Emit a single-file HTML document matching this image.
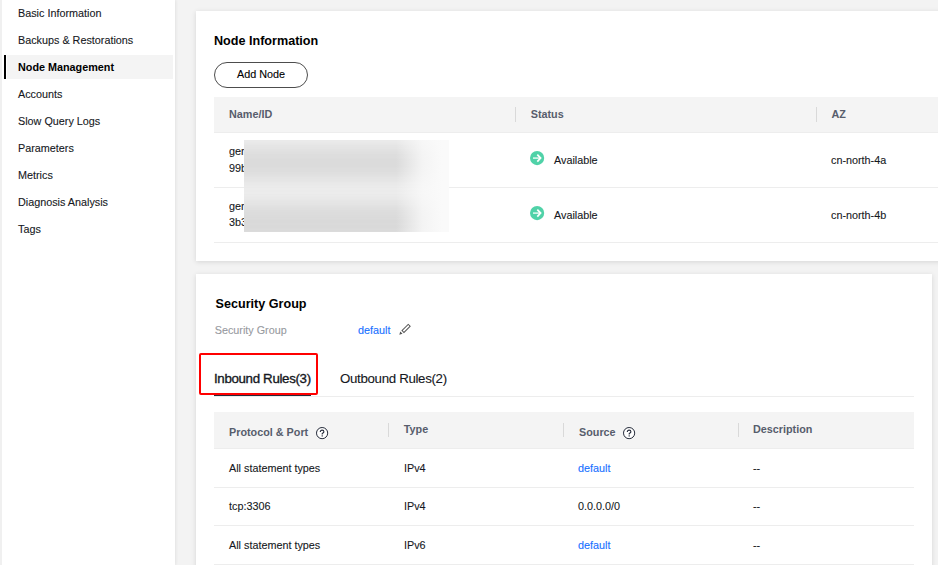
<!DOCTYPE html>
<html><head><meta charset="utf-8">
<style>
*{margin:0;padding:0;box-sizing:border-box}
html,body{width:938px;height:565px;overflow:hidden;background:#f3f3f3;font-family:"Liberation Sans",sans-serif;color:#151822}
.t{-webkit-text-stroke:0.1px currentColor}
.t.b,.t.hc{-webkit-text-stroke:0}
.a{position:absolute;white-space:nowrap}
.t{position:absolute;white-space:nowrap;font-size:10.8px;line-height:12px}
.b{font-weight:bold}
.h{font-size:12.6px;line-height:14px}
#side{position:absolute;left:0;top:0;width:175px;height:565px;background:#fff;border-left:2px solid #f0f0f0;box-shadow:1px 0 3px rgba(0,0,0,0.07)}
.card{position:absolute;background:#fff;box-shadow:0 1px 5px rgba(0,0,0,0.12)}
.line{position:absolute;height:1px;background:#ededed}
.hd{position:absolute;background:#f4f4f4;border-bottom:1px solid #ededed}
.hc{color:#575d6c;font-weight:bold}
.dv{position:absolute;width:1px;background:#d9d9d9}
.lnk{color:#1670ff}
.q{position:absolute;width:12px;height:12px;border:1px solid #252b3a;border-radius:50%;background:#fff;font-size:8.5px;line-height:11px;padding-top:1px;text-align:center;font-weight:bold;color:#252b3a}
.ok{position:absolute;width:15px;height:15px}.ok svg{display:block}
</style></head><body>
<div id="side"></div>
<div class="a" style="left:7px;top:55px;width:166px;height:24px;background:#f4f4f4"></div>
<div class="a" style="left:4px;top:55px;width:2px;height:24px;background:#000"></div>
<div class="t" style="left:18px;top:7px">Basic Information</div>
<div class="t" style="left:18px;top:34px">Backups &amp; Restorations</div>
<div class="t b" style="left:18px;top:61px;color:#000">Node Management</div>
<div class="t" style="left:18px;top:88px">Accounts</div>
<div class="t" style="left:18px;top:115px">Slow Query Logs</div>
<div class="t" style="left:18px;top:142px">Parameters</div>
<div class="t" style="left:18px;top:169px">Metrics</div>
<div class="t" style="left:18px;top:196px">Diagnosis Analysis</div>
<div class="t" style="left:18px;top:223px">Tags</div>

<!-- card 1 -->
<div class="card" style="left:196px;top:11px;width:760px;height:250px"></div>
<div class="t b h" style="left:214px;top:34px;color:#000">Node Information</div>
<div class="a" style="left:214px;top:62px;width:94px;height:26px;border:1px solid #4d4d4d;border-radius:13px"></div>
<div class="t" style="left:237px;top:68px;color:#000">Add Node</div>
<div class="hd" style="left:214px;top:97px;width:740px;height:36px"></div>
<div class="t hc" style="left:229px;top:108px">Name/ID</div>
<div class="dv" style="left:515px;top:107px;height:15px"></div>
<div class="t hc" style="left:530.7px;top:108px">Status</div>
<div class="dv" style="left:816px;top:107px;height:15px"></div>
<div class="t hc" style="left:831.5px;top:108px">AZ</div>
<div class="line" style="left:214px;top:187px;width:740px"></div>
<div class="line" style="left:214px;top:242px;width:740px"></div>
<div class="t" style="left:229px;top:145px">ger</div>
<div class="t" style="left:229px;top:162px">99b</div>
<div class="t" style="left:229px;top:200px">ger</div>
<div class="t" style="left:229px;top:216px">3b3</div>
<div class="a" style="left:244px;top:140px;width:205px;height:92px;background:#f0f0f0;overflow:hidden">
  <div class="a" style="left:-30px;top:7px;width:235px;height:32px;background:#d9d9d9;filter:blur(9px)"></div>
  <div class="a" style="left:-30px;top:63px;width:235px;height:42px;background:#d9d9d9;filter:blur(9px)"></div>
  <div class="a" style="left:152px;top:0;width:53px;height:92px;background:linear-gradient(to right,rgba(250,250,250,0) 0,rgba(250,250,250,0.8) 50%,#fafafa 88%)"></div>
</div>
<div class="ok" style="left:530px;top:151px"><svg width="15" height="15" viewBox="0 0 15 15"><circle cx="7.1" cy="7.1" r="7.1" fill="#50d2a8"/><path d="M3 7.1H10" stroke="#fff" stroke-opacity="0.85" stroke-width="1.5"/><path d="M7.3 3.6L10.6 7.1L7.3 10.6" fill="none" stroke="#fff" stroke-width="1.7"/></svg></div>
<div class="t" style="left:554px;top:154px">Available</div>
<div class="t" style="left:831px;top:154px">cn-north-4a</div>
<div class="ok" style="left:530px;top:206px"><svg width="15" height="15" viewBox="0 0 15 15"><circle cx="7.1" cy="7.1" r="7.1" fill="#50d2a8"/><path d="M3 7.1H10" stroke="#fff" stroke-opacity="0.85" stroke-width="1.5"/><path d="M7.3 3.6L10.6 7.1L7.3 10.6" fill="none" stroke="#fff" stroke-width="1.7"/></svg></div>
<div class="t" style="left:554px;top:209px">Available</div>
<div class="t" style="left:831px;top:209px">cn-north-4b</div>

<!-- card 2 -->
<div class="card" style="left:196px;top:274px;width:736px;height:320px"></div>
<div class="t b h" style="left:215.6px;top:297px;color:#000">Security Group</div>
<div class="t" style="left:214.7px;top:324px;color:#979aa0">Security Group</div>
<div class="t lnk" style="left:358px;top:324px">default</div>
<svg class="a" style="left:398px;top:322px" width="14" height="14" viewBox="0 0 14 14"><g transform="rotate(-45 8.1 6.45)"><rect x="3.7" y="5.1" width="8.8" height="2.7" fill="none" stroke="#555" stroke-width="1"/></g><path d="M2.3 9.5L4.5 11.7L1.3 12.7Z" fill="#555"/></svg>
<div class="line" style="left:214px;top:396px;width:700px"></div>
<div class="a" style="left:214px;top:394px;width:97px;height:2px;background:#252b3a"></div>
<div class="t h" style="left:214px;top:372px;font-size:13.3px;letter-spacing:-0.33px;-webkit-text-stroke:0.35px currentColor">Inbound Rules(3)</div>
<div class="t h" style="left:340px;top:372px;font-size:13.3px;letter-spacing:-0.33px">Outbound Rules(2)</div>
<div class="a" style="left:199px;top:353px;width:119px;height:42px;border:2px solid #f00;border-radius:2px"></div>

<div class="hd" style="left:214px;top:412px;width:700px;height:37px"></div>
<div class="t hc" style="left:229px;top:426px">Protocol &amp; Port</div>
<div class="a" style="left:316px;top:427px;line-height:0"><svg width="13" height="13" viewBox="0 0 13 13"><circle cx="6.1" cy="6.1" r="5.6" fill="#fff" stroke="#252b3a" stroke-width="1"/><path d="M4.3 4.9C4.3 3.7 5.1 3.1 6.1 3.1C7.1 3.1 7.9 3.7 7.9 4.7C7.9 5.7 6.7 5.9 6.2 6.6V7.6" fill="none" stroke="#252b3a" stroke-width="1.1"/><rect x="5.6" y="8.3" width="1.2" height="1.2" fill="#252b3a"/></svg></div>
<div class="dv" style="left:388px;top:423px;height:14px"></div>
<div class="t hc" style="left:403.8px;top:423px">Type</div>
<div class="dv" style="left:563px;top:423px;height:14px"></div>
<div class="t hc" style="left:579px;top:426px">Source</div>
<div class="a" style="left:623px;top:427px;line-height:0"><svg width="13" height="13" viewBox="0 0 13 13"><circle cx="6.1" cy="6.1" r="5.6" fill="#fff" stroke="#252b3a" stroke-width="1"/><path d="M4.3 4.9C4.3 3.7 5.1 3.1 6.1 3.1C7.1 3.1 7.9 3.7 7.9 4.7C7.9 5.7 6.7 5.9 6.2 6.6V7.6" fill="none" stroke="#252b3a" stroke-width="1.1"/><rect x="5.6" y="8.3" width="1.2" height="1.2" fill="#252b3a"/></svg></div>
<div class="dv" style="left:738px;top:423px;height:14px"></div>
<div class="t hc" style="left:753px;top:423px">Description</div>

<div class="line" style="left:214px;top:487px;width:700px"></div>
<div class="line" style="left:214px;top:525px;width:700px"></div>
<div class="line" style="left:214px;top:564px;width:700px"></div>
<div class="t" style="left:229px;top:462px">All statement types</div>
<div class="t" style="left:404px;top:462px">IPv4</div>
<div class="t lnk" style="left:578px;top:462px">default</div>
<div class="t" style="left:753px;top:462px">--</div>
<div class="t" style="left:229px;top:500px">tcp:3306</div>
<div class="t" style="left:404px;top:500px">IPv4</div>
<div class="t" style="left:578px;top:500px">0.0.0.0/0</div>
<div class="t" style="left:753px;top:500px">--</div>
<div class="t" style="left:229px;top:539px">All statement types</div>
<div class="t" style="left:404px;top:539px">IPv6</div>
<div class="t lnk" style="left:578px;top:539px">default</div>
<div class="t" style="left:753px;top:539px">--</div>
</body></html>
